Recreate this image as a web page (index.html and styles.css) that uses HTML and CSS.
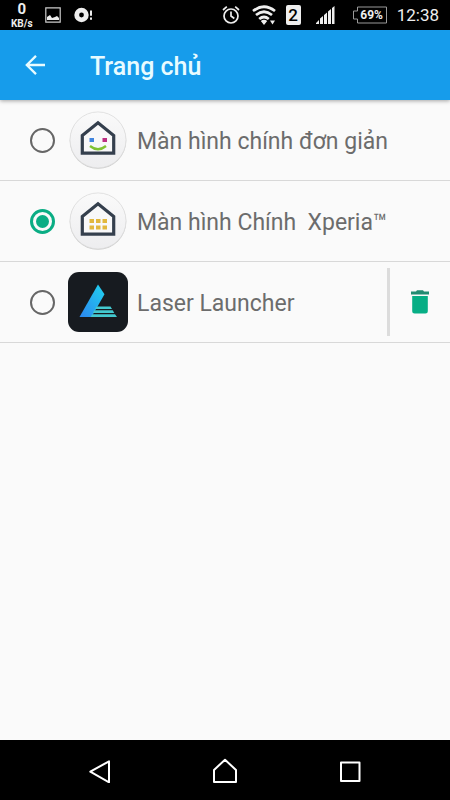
FILE: index.html
```html
<!DOCTYPE html>
<html lang="vi">
<head>
<meta charset="utf-8">
<meta name="viewport" content="width=device-width, initial-scale=1">
<title>Trang chủ</title>
<link rel="stylesheet" href="styles.css">
</head>
<body>
<div class="screen">
  <div class="status">
    <div class="status-left">
      <div class="speed"><span class="speed-value">0</span><span class="speed-unit">KB/s</span></div>
      <svg width="16" height="16" viewBox="0 0 16 16"><path d="M.8.8h14.4v14.4H.8z" fill="none" stroke="#ccc" stroke-width="1.2"/><path d="M2 13v-3l3-2 2 3 3-1 2-1 2 2v2z" fill="#eee"/></svg>
      <svg width="20" height="16" viewBox="0 0 20 16"><circle cx="8.500" cy="8" r="4.800" fill="none" stroke="#eee" stroke-width="4.800"/><path d="M18 3.500v5.200M18 10.500v2.300" stroke="#eee" stroke-width="2"/></svg>
    </div>
    <div class="status-right">
      <svg width="18" height="20" viewBox="0 0 18 20"><g fill="none" stroke="#eee" stroke-width="1.700"><circle cx="9" cy="11" r="7"/><path d="M9 6.500V11l3.300 2.500M1 5l3.800-3.300M17 5l-3.800-3.300"/></g></svg>
      <svg width="24" height="20" viewBox="0 0 24 20"><g fill="none" stroke="#eee" stroke-width="2.700"><path d="M1 6Q12-2.500 23 6"/><path d="M4 10Q12 3.500 20 10"/><path d="M7.200 14Q12 10 16.800 14"/></g><path d="M8.800 16Q12 13.400 15.200 16L12 20zM18 15.500h5L20.500 19.500z" fill="#eee"/></svg>
      <div class="sim">2</div>
      <svg width="19" height="18" viewBox="0 0 19 18"><path d="M0 18v-1l3-3v4zM4 18v-5.500l3-2.500v8zM8 18V9l3-2.500V18zM12 18V5.500L15 3v15zM16 18V2l2.500-2v18z" fill="#eee"/></svg>
      <div class="battery"><svg width="34" height="18" viewBox="0 0 34 18"><path d="M4.500 1h29v16h-29v-4h-4V5h4z" fill="none" stroke="#999"/></svg><span class="battery-text">69%</span></div>
      <time class="clock">12:38</time>
    </div>
  </div>
  <header class="appbar">
    <button class="back" type="button" aria-label="Quay lại"><svg width="20" height="20" viewBox="0 0 20 20"><path d="M20 10H1.800M11 .9L1.800 10 11 19.100" fill="none" stroke="#e8fbff" stroke-width="2.300"/></svg></button>
    <h1 class="title">Trang chủ</h1>
  </header>
  <main class="list">
    <div class="row">
      <label class="choice">
        <input class="radio" type="radio" name="home">
        <svg class="app" viewBox="0 0 60 60"><defs><linearGradient id="disc" x2="0" y2="1"><stop stop-color="#fafafa"/><stop offset="1" stop-color="#ededef"/></linearGradient></defs><circle cx="30" cy="30.500" r="28.300" fill="#ccc"/><circle cx="30" cy="29.900" r="28" fill="url(#disc)" stroke="#ddd" stroke-width=".8"/><path d="M14.300 43.200V25.500L30 12.800l15.700 12.700v17.700z" fill="#f8f8f9" stroke="#343f4d" stroke-width="3.200"/><path d="M21.500 28h4.500v4h-4.500z" fill="#4285df"/><path d="M34.500 28H39v4h-4.500z" fill="#bd2f82"/><path d="M22 36q8 6.500 16 0" fill="none" stroke="#7fc232" stroke-width="2.400"/></svg>
        <span class="name">Màn hình chính đơn giản</span>
      </label>
    </div>
    <div class="row">
      <label class="choice">
        <input class="radio" type="radio" name="home" checked>
        <svg class="app" viewBox="0 0 60 60"><circle cx="30" cy="30.500" r="28.300" fill="#ccc"/><circle cx="30" cy="29.900" r="28" fill="url(#disc)" stroke="#ddd" stroke-width=".8"/><path d="M14.300 43.200V25.500L30 12.800l15.700 12.700v17.700z" fill="#f8f8f9" stroke="#343f4d" stroke-width="3.200"/><path d="M21.500 28H26v4h-4.500zM28 28h4.500v4H28zM34.500 28H39v4h-4.500zM21.500 34.500H26v4h-4.500zM28 34.500h4.500v4H28zM34.500 34.500H39v4h-4.500z" fill="#e2b83d"/></svg>
        <span class="name">Màn hình Chính&nbsp; Xperia™</span>
      </label>
    </div>
    <div class="row">
      <label class="choice">
        <input class="radio" type="radio" name="home">
        <svg class="app" viewBox="0 0 60 60"><defs><linearGradient id="beam" x1="1" y1="0" x2="0" y2="1"><stop stop-color="#20d3ef"/><stop offset="1" stop-color="#2c86f0"/></linearGradient></defs><rect width="60" height="60" rx="11" fill="#171b20"/><path d="M30 12.500l6.500 9.700L23.500 45H11.500z" fill="url(#beam)"/><path d="M28.500 34.500h14l1.500 2.600H27zM26.400 38.300h18.300l1.600 2.800H24.800zM24.200 42.300H47l2 2.700H22.700z" fill="#43c9cf"/></svg>
        <span class="name">Laser Launcher</span>
      </label>
      <button class="delete" type="button" aria-label="Xóa Laser Launcher"><svg width="18" height="24" viewBox="0 0 18 24"><path d="M0 1.500h5L6 .3h6l1 1.200h5v3H0z" fill="#238b72"/><path d="M1.200 6h15.600v15q0 2.500-2.500 2.500H3.700Q1.200 23.500 1.200 21z" fill="#07ae85"/></svg></button>
    </div>
  </main>
  <nav class="navbar">
    <button class="nav" type="button" aria-label="Trở lại"><svg width="26" height="26" viewBox="0 0 26 26"><path d="M3.300 14.700L22 4.300v21z"/></svg></button>
    <button class="nav" type="button" aria-label="Màn hình chính"><svg width="26" height="26" viewBox="0 0 26 26"><path d="M2 25V13L13 2.700 24 13v12z"/></svg></button>
    <button class="nav" type="button" aria-label="Gần đây"><svg width="26" height="26" viewBox="0 0 26 26"><path d="M4 5.500h18.500V24H4z"/></svg></button>
  </nav>
</div>
</body>
</html>
```
FILE: styles.css
```css
* {
  box-sizing: border-box;
}

body {
  margin: 0;
  font-family: Roboto, "Noto Sans", sans-serif;
  background: #fafafa;
}

button {
  display: flex;
  align-items: center;
  justify-content: center;
  padding: 0;
  border: 0;
  background: none;
}

svg {
  display: block;
  flex: none;
}

.screen {
  display: flex;
  flex-direction: column;
  min-height: 100vh;
}

.status {
  display: flex;
  justify-content: space-between;
  height: 30px;
  padding: 0 11px;
  background: #000;
  color: #eee;
}

.status-left,
.status-right {
  display: flex;
  align-items: center;
  gap: 12px;
}

.status-right {
  gap: 10px;
}

.speed {
  display: flex;
  flex-direction: column;
  align-items: center;
  font-weight: 700;
}

.speed-value {
  font-size: 15px;
  line-height: 18px;
}

.speed-unit {
  font-size: 10px;
  line-height: 12px;
}

.sim {
  width: 15px;
  border-radius: 2px;
  background: #eee;
  color: #000;
  font-size: 17px;
  font-weight: 500;
  line-height: 20px;
  text-align: center;
}

.status-right svg:nth-of-type(2) {
  margin-left: 2px;
}

.sim + svg {
  margin-left: 5px;
}

.battery {
  display: grid;
  align-items: center;
  margin-left: 8px;
}

.battery > * {
  grid-area: 1 / 1;
}

.battery-text {
  padding-left: 4px;
  font-size: 12px;
  font-weight: 700;
  line-height: 18px;
  text-align: center;
}

.clock {
  font-size: 17px;
  line-height: 30px;
}

.appbar {
  position: relative;
  display: flex;
  align-items: center;
  height: 70px;
  background: #169ceb;
  box-shadow: 0 1px 4px rgba(0, 0, 0, 0.35);
}

.back {
  width: 70px;
  height: 70px;
}

.title {
  margin: 3px 0 0 20px;
  color: #e8fbff;
  font-size: 25px;
  font-weight: 500;
  line-height: 32px;
}

.list {
  flex: 1;
}

.row {
  display: flex;
  align-items: center;
  min-height: 81px;
  border-bottom: 1px solid #d8d8d8;
}

.choice {
  display: flex;
  flex: 1;
  align-items: center;
  padding-left: 30px;
}

.radio {
  display: grid;
  flex: none;
  place-items: center;
  width: 25px;
  height: 25px;
  margin: 0;
  border: 2px solid #666;
  border-radius: 50%;
  appearance: none;
}

.radio:checked {
  border: 3px solid #0aad84;
}

.radio:checked::before {
  width: 13px;
  height: 13px;
  border-radius: 50%;
  background: #0aad84;
  content: "";
}

.app {
  width: 60px;
  height: 60px;
  margin: 0 9px 0 13px;
}

.name {
  padding-top: 4px;
  color: #6c6c6c;
  font-size: 23px;
  line-height: 30px;
}

.delete {
  width: 63px;
  height: 68px;
  border-left: 3px solid #dcdcdc;
}

.navbar {
  display: flex;
  justify-content: center;
  height: 60px;
  background: #000;
}

.nav {
  flex: 0 1 125px;
}

.nav path {
  fill: none;
  stroke: #fff;
  stroke-width: 2;
  stroke-linejoin: round;
}
```
